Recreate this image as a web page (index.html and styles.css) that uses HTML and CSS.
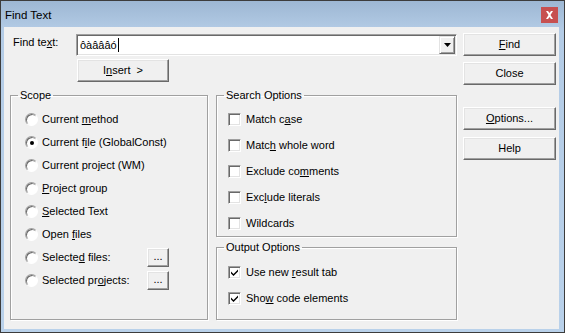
FILE: index.html
```html
<!DOCTYPE html>
<html>

<head>
    <meta charset="utf-8" />
    <title>Find Text</title>
    <link rel="stylesheet" href="styles.css">
</head>

<body>
    <div class="window">
        <div class="titlebar">
            <span class="title">Find Text</span>
            <span class="close-x">
                <svg width="9" height="8" viewBox="0 0 9 8">
                    <path d="M1 0h2l1.5 2L6 0h2L5.5 4 8 8H6L4.5 6 3 8H1l2.5-4z" fill="#fff" />
                </svg>
            </span>
        </div>
        <div class="client">
            <div class="left">
                <div class="find-row">
                    <label class="find-label">Find te<u>x</u>t:</label>
                    <div class="combo">
                        <div class="combo-text">ôàâââó<span class="caret"></span></div>
                        <div class="combo-btn">
                            <svg width="7" height="4" viewBox="0 0 7 4">
                                <path d="M0 0h7L3.5 4z" fill="#000" />
                            </svg>
                        </div>
                    </div>
                </div>
                <div class="insert-row">
                    <button class="btn insert">I<u>n</u>sert &nbsp;&gt;</button>
                </div>
                <div class="groups">
                    <fieldset class="group scope">
                        <legend>Scope</legend>
                        <div class="opt-list">
                            <div class="row"><span class="radio"></span><span>Current <u>m</u>ethod</span></div>
                            <div class="row"><span class="radio on"></span><span>Current f<u>i</u>le (GlobalConst)</span></div>
                            <div class="row"><span class="radio"></span><span>Current pro<u>j</u>ect (WM)</span></div>
                            <div class="row"><span class="radio"></span><span><u>P</u>roject group</span></div>
                            <div class="row"><span class="radio"></span><span><u>S</u>elected Text</span></div>
                            <div class="row"><span class="radio"></span><span>Open <u>f</u>iles</span></div>
                            <div class="row">
                                <span class="pick"><span class="radio"></span><span>Selecte<u>d</u> files:</span></span>
                                <button class="btn dots">...</button>
                            </div>
                            <div class="row">
                                <span class="pick"><span class="radio"></span><span>Selected pr<u>o</u>jects:</span></span>
                                <button class="btn dots">...</button>
                            </div>
                        </div>
                    </fieldset>
                    <div class="group-col">
                        <fieldset class="group search">
                            <legend>Search Options</legend>
                            <div class="opt-list checks">
                                <div class="row"><span class="check"></span><span>Match c<u>a</u>se</span></div>
                                <div class="row"><span class="check"></span><span>Matc<u>h</u> whole word</span></div>
                                <div class="row"><span class="check"></span><span>Exclude co<u>m</u>ments</span></div>
                                <div class="row"><span class="check"></span><span>Exc<u>l</u>ude literals</span></div>
                                <div class="row"><span class="check"></span><span>Wildcards</span></div>
                            </div>
                        </fieldset>
                        <fieldset class="group output">
                            <legend>Output Options</legend>
                            <div class="opt-list checks">
                                <div class="row">
                                    <span class="check"><svg width="9" height="9" viewBox="0 0 9 9"><path d="M1 3.5l2.5 2.5L8 1.5v2L3.5 8 1 5.5z" fill="#000" /></svg></span>
                                    <span>Use new <u>r</u>esult tab</span>
                                </div>
                                <div class="row">
                                    <span class="check"><svg width="9" height="9" viewBox="0 0 9 9"><path d="M1 3.5l2.5 2.5L8 1.5v2L3.5 8 1 5.5z" fill="#000" /></svg></span>
                                    <span>Sho<u>w</u> code elements</span>
                                </div>
                            </div>
                        </fieldset>
                    </div>
                </div>
            </div>
            <div class="right">
                <button class="btn side find"><u>F</u>ind</button>
                <button class="btn side close">Close</button>
                <button class="btn side options"><u>O</u>ptions...</button>
                <button class="btn side help">Help</button>
            </div>
        </div>
    </div>
</body>

</html>
```
FILE: styles.css
```css
body {
    margin: 0;
    background: #fff;
    font-family: "Liberation Sans", Arial, sans-serif;
    font-size: 11px;
    color: #000;
}

.window {
    width: 565px;
    height: 333px;
    box-sizing: border-box;
    border: 1px solid #3c3c3c;
    background: linear-gradient(180deg, #9db7d3 0, #b4cce6 30px, #b9d1ea 100%);
    display: flex;
    flex-direction: column;
}

.titlebar {
    height: 26px;
    display: flex;
    align-items: center;
    padding: 0 6px 0 4px;
}

.title {
    flex: 1;
    font-size: 11.5px;
    padding-top: 1px;
}

.close-x {
    width: 17px;
    height: 16px;
    background: #c75050;
    display: flex;
    align-items: center;
    justify-content: center;
    margin-top: 2px;
}

/* client area */
.client {
    flex: 1;
    margin: 0 5px 3px 3px;
    background: #f0f0f0;
    display: flex;
    gap: 6px;
    padding: 6px 2px 9px 6px;
}

.left {
    width: 447px;
    display: flex;
    flex-direction: column;
}

.find-row {
    display: flex;
    height: 23px;
    align-items: flex-start;
}

.find-label {
    width: 63px;
    padding-left: 3px;
    line-height: 13px;
    padding-top: 3px;
}

.combo {
    width: 381px;
    height: 22px;
    margin-top: 1px;
    box-sizing: border-box;
    border: 1px solid;
    border-color: #a0a0a0 #fff #fff #a0a0a0;
    box-shadow: inset 1px 1px 0 #696969, inset -1px -1px 0 #e3e3e3;
    background: #fff;
    display: flex;
    padding: 1px 1px 1px 1px;
}

.combo-text {
    flex: 1;
    padding: 3px 0 0 2px;
    line-height: 13px;
    display: flex;
    align-items: flex-start;
}

.caret {
    width: 1px;
    height: 14px;
    background: #000;
    margin-left: 1px;
    margin-top: -1px;
}

.combo-btn {
    width: 16px;
    box-sizing: border-box;
    background: #f0f0f0;
    border: 1px solid;
    border-color: #e3e3e3 #696969 #696969 #e3e3e3;
    box-shadow: inset 1px 1px 0 #fff, inset -1px -1px 0 #a0a0a0;
    display: flex;
    align-items: center;
    justify-content: center;
}

.btn {
    font-family: inherit;
    font-size: 11px;
    color: #000;
    background: #f0f0f0;
    box-sizing: border-box;
    border: 1px solid;
    border-color: #fff #696969 #696969 #fff;
    box-shadow: inset -1px -1px 0 #a0a0a0, inset 1px 1px 0 #e3e3e3;
    padding: 0;
    margin: 0;
    line-height: 13px;
}

.insert-row {
    margin-top: 3px;
    padding-left: 67px;
}

.insert {
    width: 92px;
    height: 23px;
}

.groups {
    margin-top: 7px;
    flex: 1;
    display: flex;
    gap: 8px;
}

.group {
    margin: 0;
    min-width: 0;
    border: 1px solid #a0a0a0;
    box-shadow: inset 1px 1px 0 #fff, 1px 1px 0 #fff;
    padding: 0 0 0 7px;
}

.group legend {
    padding: 0 2px;
    line-height: 13px;
}

.scope {
    width: 198px;
    box-sizing: border-box;
    padding-top: 6px;
}

.group-col {
    flex: 1;
    display: flex;
    flex-direction: column;
}

.search {
    padding-top: 4px;
}

.output {
    flex: 1;
    margin-top: 4px;
    padding-top: 5px;
}

.opt-list {
    margin-left: 7px;
    display: flex;
    flex-direction: column;
}

.checks {
    margin-left: 4px;
}

.row {
    height: 23px;
    display: flex;
    align-items: center;
    gap: 4px;
    line-height: 13px;
}

.checks .row {
    height: 26px;
    gap: 5px;
}

.pick {
    width: 118px;
    display: flex;
    align-items: center;
    gap: 4px;
}

.dots {
    width: 22px;
    height: 19px;
    line-height: 11px;
    padding-bottom: 2px;
}

.radio {
    width: 13px;
    height: 13px;
    box-sizing: border-box;
    border-radius: 50%;
    background: #fff;
    border: 1px solid;
    border-color: #a0a0a0 #fff #fff #a0a0a0;
    box-shadow: inset 1px 1px 0 #696969;
    display: flex;
    align-items: center;
    justify-content: center;
}

.radio.on::after {
    content: "";
    width: 4px;
    height: 4px;
    border-radius: 50%;
    background: #000;
}

.check {
    width: 13px;
    height: 13px;
    box-sizing: border-box;
    background: #fff;
    border: 1px solid;
    border-color: #a0a0a0 #fff #fff #a0a0a0;
    box-shadow: inset 1px 1px 0 #696969, inset -1px -1px 0 #e3e3e3;
    display: flex;
    align-items: center;
    justify-content: center;
}

.right {
    width: 93px;
    display: flex;
    flex-direction: column;
}

.side {
    height: 23px;
}

.close {
    margin-top: 6px;
}

.options {
    margin-top: 22px;
}

.help {
    margin-top: 7px;
}
```
